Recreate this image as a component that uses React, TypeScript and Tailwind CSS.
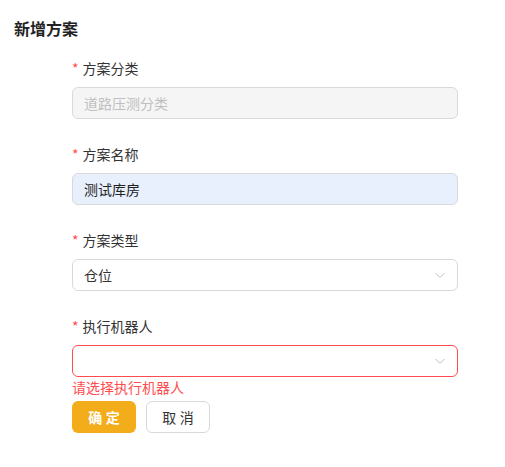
import React from "react";

const font = { fontFamily: '"Noto Sans CJK SC", "Noto Sans", sans-serif' };

function Chevron() {
  return (
    <svg width="12" height="12" viewBox="0 0 12 12" className="text-[#bfbfbf]">
      <path d="M1.5 4 L6 8.5 L10.5 4" fill="none" stroke="currentColor" strokeWidth="1" />
    </svg>
  );
}

function Label({ text }: { text: string }) {
  return (
    <div className="flex items-center h-[22px] mb-2 text-[14px] text-[#333]">
      <span className="text-[#ff4d4f] mr-1 text-[14px]">*</span>
      <span>{text}</span>
    </div>
  );
}

export default function App() {
  return (
    <div className="w-[505px] h-[467px] bg-white" style={font}>
      <h1 className="pt-4 pl-[14px] text-[16px] leading-6 font-bold text-[#222]">新增方案</h1>

      <form className="pl-[72px] pr-[47px] mt-[17px]">
        <div className="mb-6">
          <Label text="方案分类" />
          <div className="h-8 rounded-md border border-[#d9d9d9] bg-[#f5f5f5] px-[11px] flex items-center text-[14px] text-[#bfbfbf]">
            道路压测分类
          </div>
        </div>

        <div className="mb-6">
          <Label text="方案名称" />
          <div className="h-8 rounded-md border border-[#d9d9d9] bg-[#e8f0fe] px-[11px] flex items-center text-[14px] text-[#222]">
            测试库房
          </div>
        </div>

        <div className="mb-6">
          <Label text="方案类型" />
          <div className="h-8 rounded-md border border-[#d9d9d9] bg-white px-[11px] flex items-center justify-between text-[14px] text-[#333]">
            <span>仓位</span>
            <Chevron />
          </div>
        </div>

        <div>
          <Label text="执行机器人" />
          <div className="h-8 rounded-md border border-[#ff4d4f] bg-white px-[11px] flex items-center justify-end">
            <Chevron />
          </div>
          <div className="h-5 leading-5 text-[14px] text-[#ff4d4f]">请选择执行机器人</div>
        </div>

        <div className="flex gap-[10px] mt-1">
          <button
            type="button"
            className="h-8 w-16 rounded-md bg-[#f4ad1a] text-white text-[14px] font-bold tracking-[0.25em] pl-[0.25em]"
          >
            确定
          </button>
          <button
            type="button"
            className="h-8 w-16 rounded-md border border-[#d9d9d9] bg-white text-[#333] text-[14px] tracking-[0.25em] pl-[0.25em]"
          >
            取消
          </button>
        </div>
      </form>
    </div>
  );
}
